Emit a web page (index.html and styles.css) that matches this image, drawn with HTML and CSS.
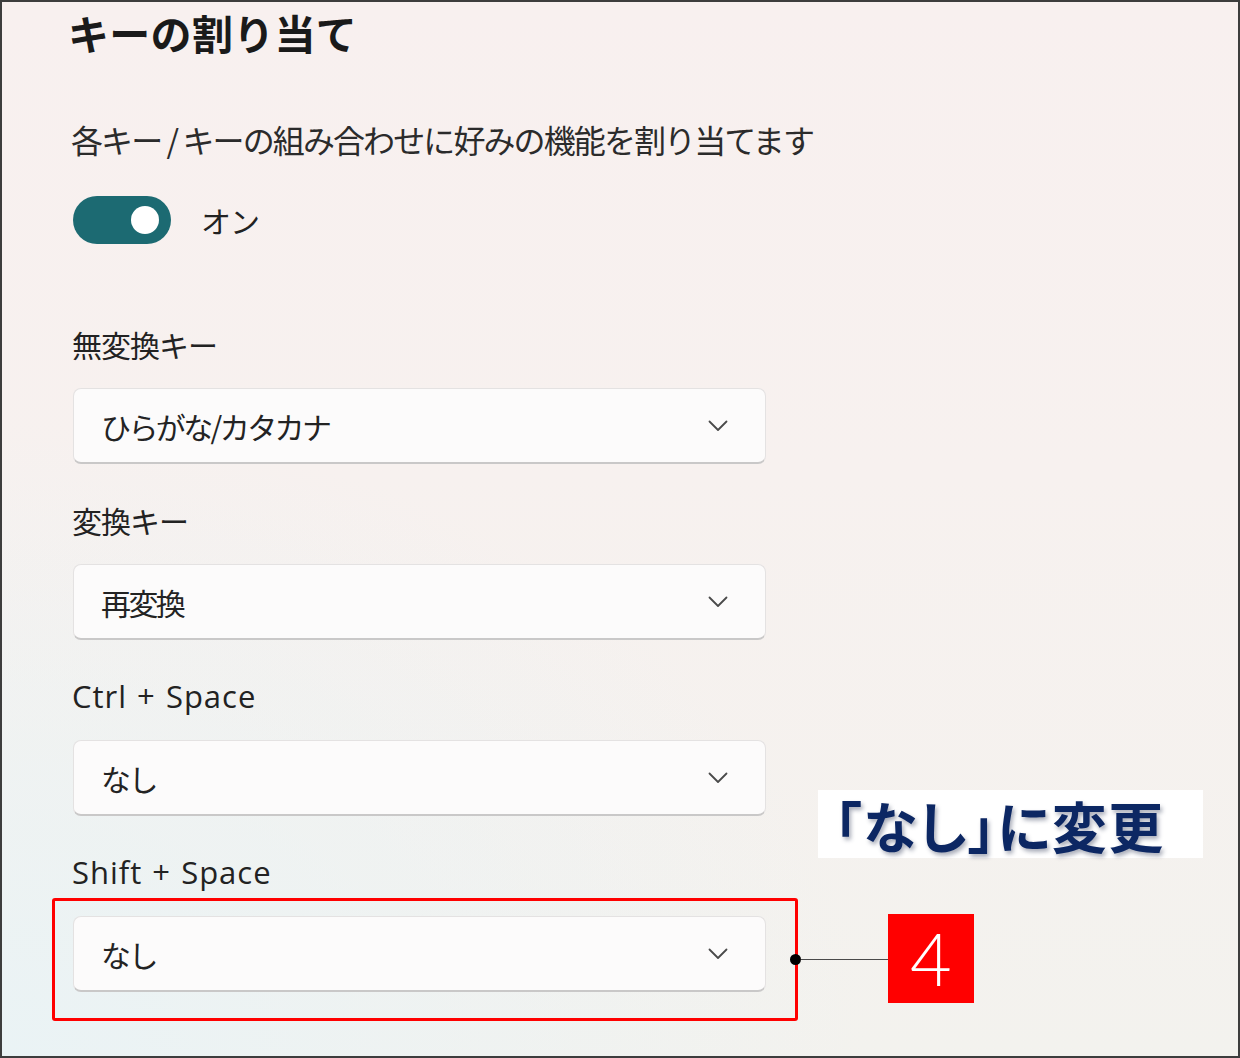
FILE: index.html
```html
<!DOCTYPE html>
<html lang="ja">
<head>
<meta charset="utf-8">
<title>キーの割り当て</title>
<link rel="stylesheet" href="styles.css">
</head>
<body>
<div class="frame">
  <div class="content">
    <h1 class="title">キーの割り当て</h1>
    <p class="desc">各キー / キーの組み合わせに好みの機能を割り当てます</p>
    <div class="toggle-row">
      <span class="toggle"><span class="knob"></span></span>
      <span class="toggle-label">オン</span>
    </div>
    <div class="settings">
      <div class="setting">
        <div class="label">無変換キー</div>
        <div class="select"><span class="value">ひらがな/カタカナ</span><svg class="chev" viewBox="0 0 20 12" width="20" height="12"><path d="M1.5 1.5 L10 10 L18.5 1.5" fill="none" stroke="#4a4a4a" stroke-width="1.8" stroke-linecap="round" stroke-linejoin="round"/></svg></div>
      </div>
      <div class="setting">
        <div class="label">変換キー</div>
        <div class="select"><span class="value">再変換</span><svg class="chev" viewBox="0 0 20 12" width="20" height="12"><path d="M1.5 1.5 L10 10 L18.5 1.5" fill="none" stroke="#4a4a4a" stroke-width="1.8" stroke-linecap="round" stroke-linejoin="round"/></svg></div>
      </div>
      <div class="setting">
        <div class="label latin">Ctrl + Space</div>
        <div class="select"><span class="value">なし</span><svg class="chev" viewBox="0 0 20 12" width="20" height="12"><path d="M1.5 1.5 L10 10 L18.5 1.5" fill="none" stroke="#4a4a4a" stroke-width="1.8" stroke-linecap="round" stroke-linejoin="round"/></svg></div>
      </div>
      <div class="setting">
        <div class="label latin">Shift + Space</div>
        <div class="select"><span class="value">なし</span><svg class="chev" viewBox="0 0 20 12" width="20" height="12"><path d="M1.5 1.5 L10 10 L18.5 1.5" fill="none" stroke="#4a4a4a" stroke-width="1.8" stroke-linecap="round" stroke-linejoin="round"/></svg></div>
      </div>
    </div>
  </div>

  <div class="highlight"></div>
  <div class="leader"><span class="dot"></span><span class="line"></span></div>
  <div class="badge">4</div>
  <div class="callout">「なし」に変更</div>
</div>
</body>
</html>
```
FILE: styles.css
```css
html, body {
  margin: 0;
  padding: 0;
}
body {
  width: 1240px;
  height: 1058px;
  overflow: hidden;
  font-family: "Noto Sans CJK JP", "Noto Sans", sans-serif;
  color: #1f1f1f;
}
.frame {
  position: relative;
  box-sizing: border-box;
  width: 1240px;
  height: 1058px;
  border: 2px solid #3d3d3d;
  background:
    radial-gradient(ellipse 70% 60% at 0% 100%, #eaf3f5 0%, rgba(234,243,245,0) 100%),
    linear-gradient(180deg, #f8f0ef 0%, #f7f1ef 45%, #f3f2ee 100%);
}
.content {
  padding: 5px 0 0 66px;
}
.title {
  margin: 0 0 0 0;
  font-size: 41px;
  line-height: 50px;
  font-weight: 700;
  color: #1a1a1a;
  letter-spacing: 0.3px;
}
.desc {
  margin: 62px 0 0 3px;
  font-size: 32px;
  line-height: 40px;
  letter-spacing: -1.9px;
  color: #2b2b2b;
}
.toggle-row {
  margin: 37px 0 0 5px;
  display: flex;
  align-items: center;
  gap: 30px;
}
.toggle {
  position: relative;
  display: block;
  width: 98px;
  height: 48px;
  border-radius: 24px;
  background: #1c6a72;
}
.knob {
  position: absolute;
  right: 12px;
  top: 10px;
  width: 28px;
  height: 28px;
  border-radius: 50%;
  background: #ffffff;
}
.toggle-label {
  font-size: 30px;
  line-height: 40px;
  color: #222;
  letter-spacing: -1px;
}
.settings {
  margin: 80px 0 0 4px;
  display: flex;
  flex-direction: column;
  gap: 36px;
}
.setting {
  display: flex;
  flex-direction: column;
  gap: 24px;
}
.label {
  font-size: 30px;
  line-height: 40px;
  color: #222;
  letter-spacing: -1px;
}
.label.latin {
  font-family: "Open Sans", "Noto Sans", sans-serif;
  font-size: 31px;
  letter-spacing: 1px;
  word-spacing: 1px;
}
.select {
  box-sizing: border-box;
  width: 693px;
  height: 76px;
  margin-left: 1px;
  display: flex;
  align-items: center;
  justify-content: space-between;
  padding: 0 37px 0 27px;
  background: #fcfbfb;
  border: 1px solid #e4e2e2;
  border-bottom: 2px solid #c9c8c8;
  border-radius: 8px;
}
.value {
  font-size: 30px;
  line-height: 40px;
  color: #232323;
  letter-spacing: -2.6px;
}
.chev {
  display: block;
}
/* annotations */
.highlight {
  position: absolute;
  left: 50px;
  top: 896px;
  width: 746px;
  height: 123px;
  box-sizing: border-box;
  border: 3px solid #ff0000;
  border-radius: 3px;
}
.leader {
  position: absolute;
  left: 788px;
  top: 952px;
  display: flex;
  align-items: center;
}
.dot {
  width: 11px;
  height: 11px;
  border-radius: 50%;
  background: #000;
}
.line {
  width: 94px;
  height: 1px;
  background: #4a4a4a;
}
.badge {
  position: absolute;
  left: 886px;
  top: 912px;
  width: 86px;
  height: 89px;
  background: #ff0000;
  color: #fff;
  font-family: "Lato", "Open Sans", sans-serif;
  font-weight: 300;
  font-size: 72px;
  line-height: 89px;
  text-align: center;
}
.callout {
  position: absolute;
  left: 816px;
  top: 788px;
  width: 385px;
  height: 68px;
  box-sizing: border-box;
  padding-left: 16px;
  background: #ffffff;
  color: #0c2763;
  font-size: 55px;
  font-weight: 700;
  line-height: 68px;
  letter-spacing: 1.5px;
  font-feature-settings: "palt" 1;
  text-shadow: 2px 3px 4px rgba(40, 50, 80, 0.4);
  white-space: nowrap;
}
```
